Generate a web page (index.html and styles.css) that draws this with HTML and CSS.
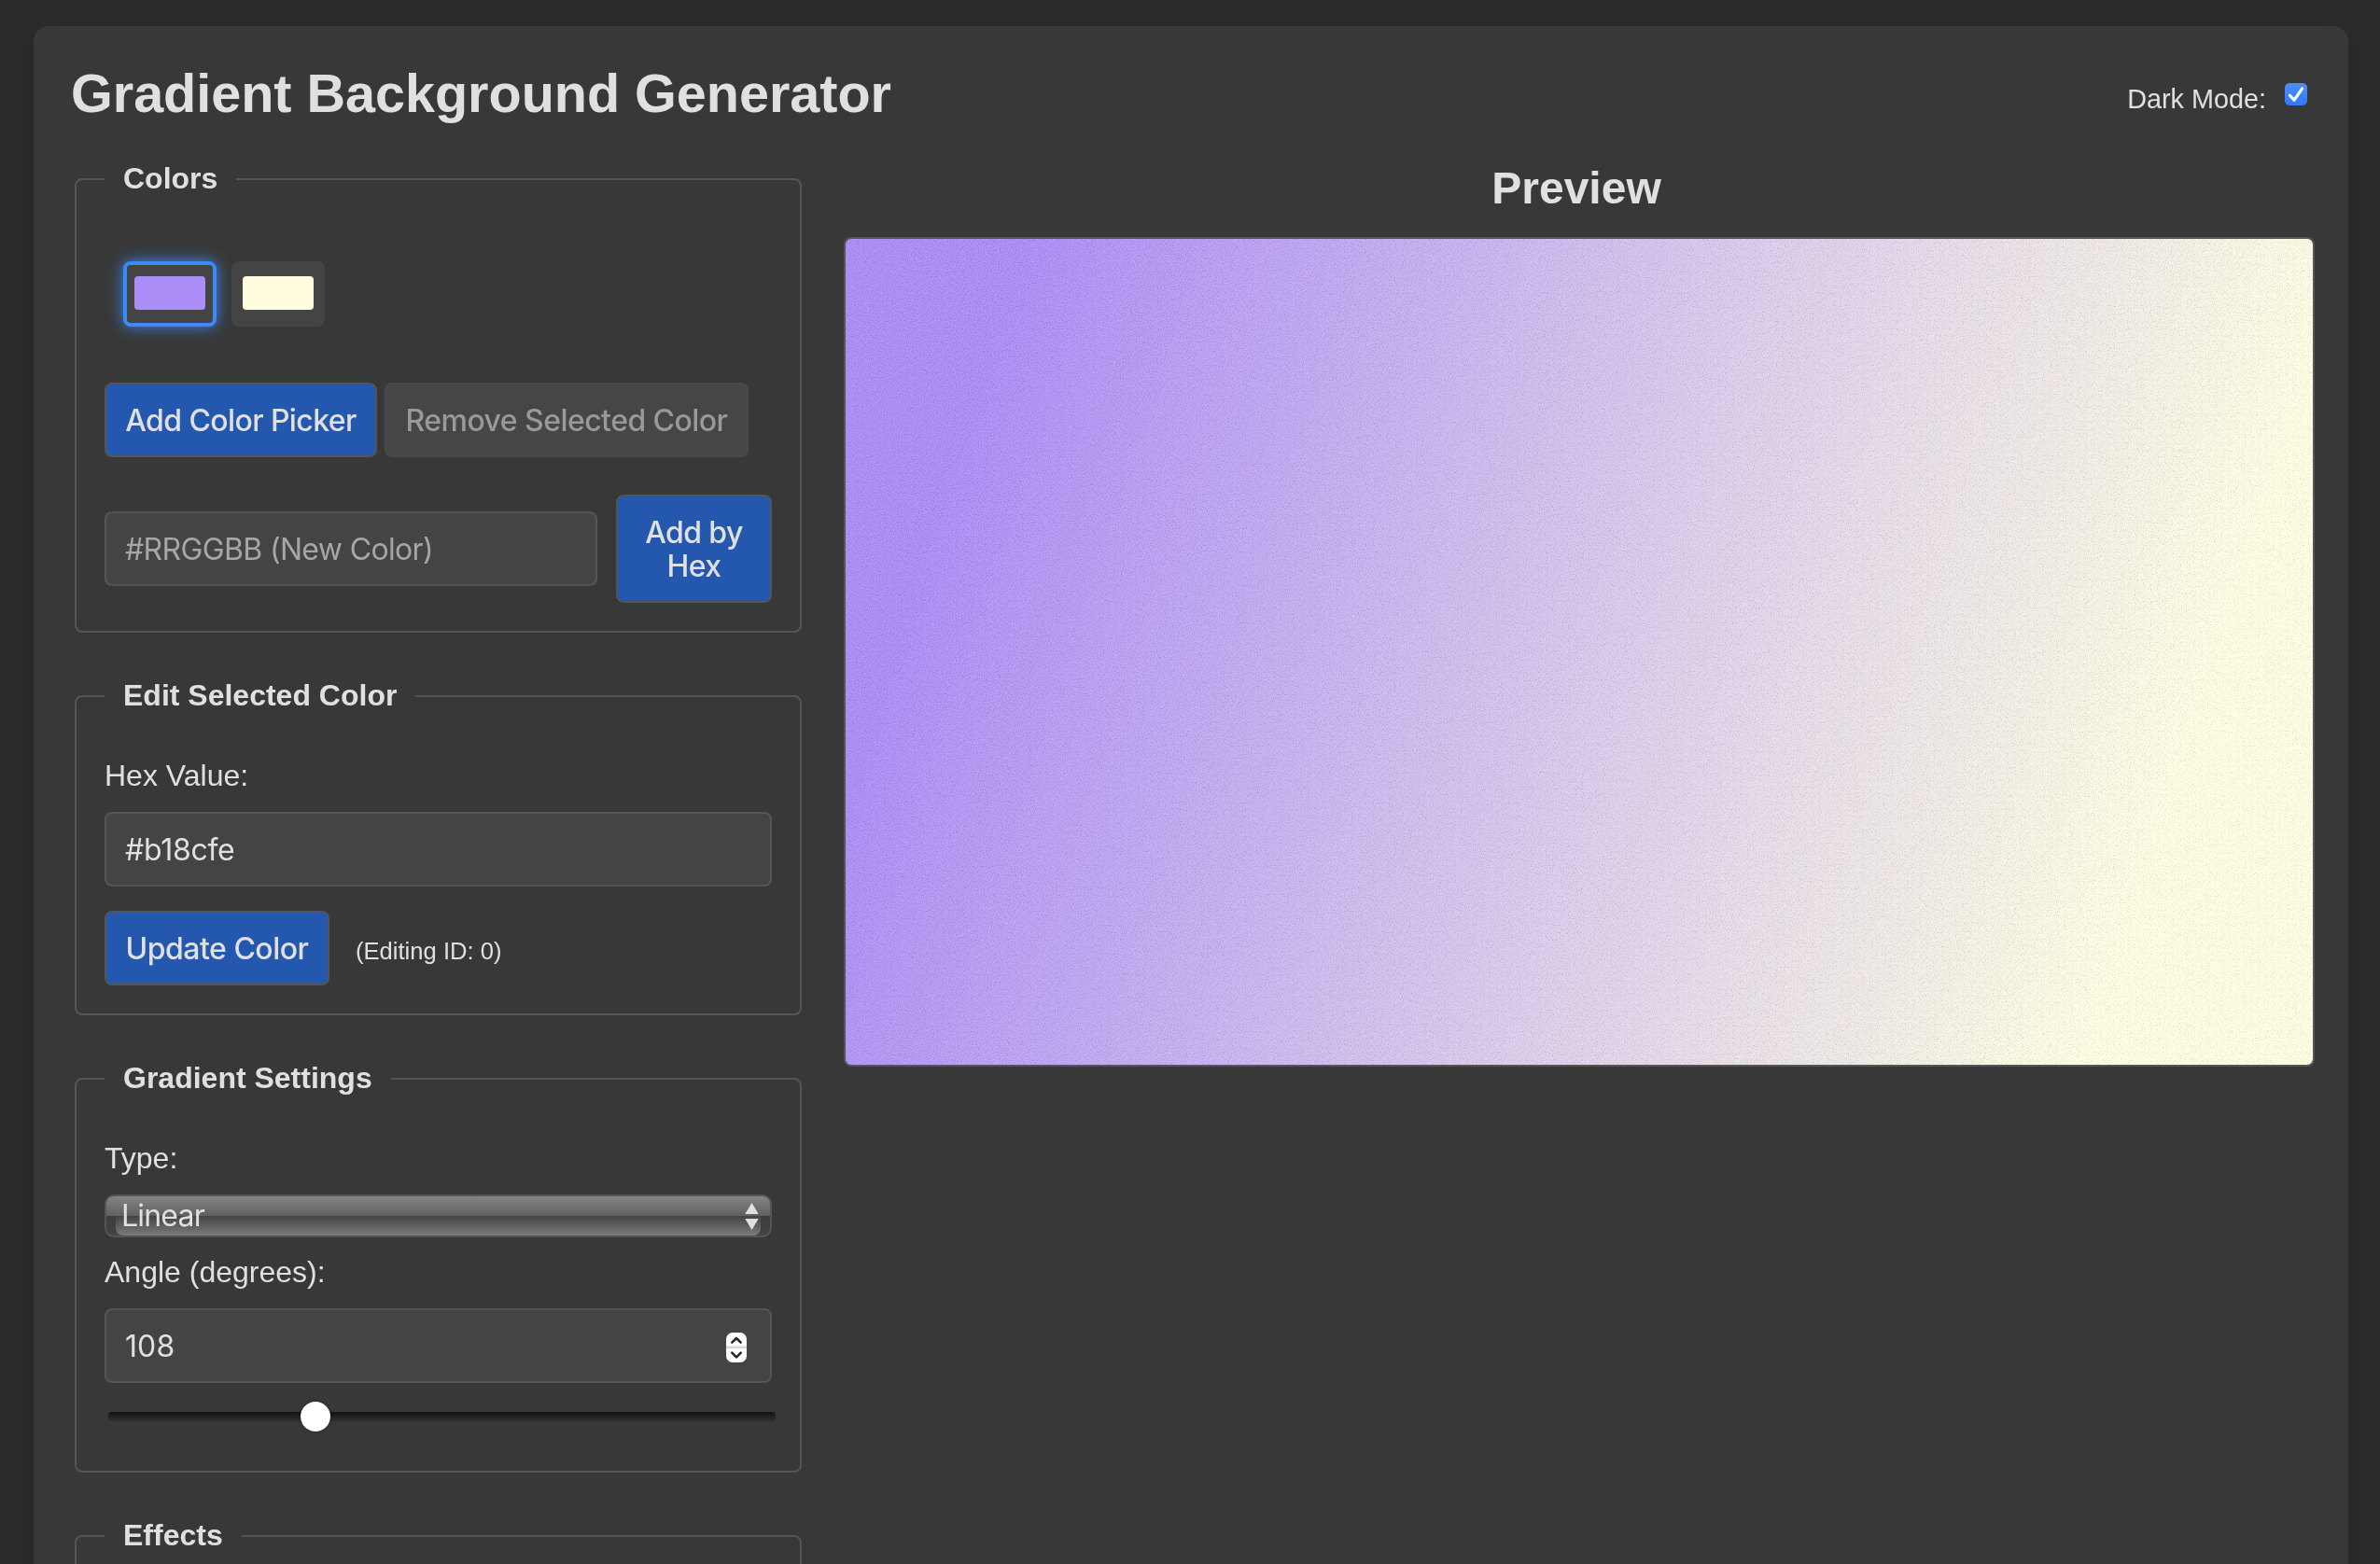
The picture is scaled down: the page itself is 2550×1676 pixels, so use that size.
FILE: index.html
```html
<!DOCTYPE html>
<html lang="en">
<head>
<meta charset="utf-8">
<title>Gradient Background Generator</title>
<link rel="stylesheet" href="styles.css">
</head>
<body>
<main class="container">
  <header class="header">
    <h1>Gradient Background Generator</h1>
    <div class="theme-toggle">
      <span>Dark Mode:</span>
      <svg class="checkbox" viewBox="0 0 24 24"><defs><linearGradient id="cb" x1="0" y1="0" x2="0" y2="1"><stop offset="0" stop-color="#4a90f8"/><stop offset="1" stop-color="#3478f6"/></linearGradient></defs><rect width="24" height="24" rx="5" fill="url(#cb)"/><path d="M5.4 13.2 L10 18.3 L18.6 5.9" fill="none" stroke="#fff" stroke-width="3.1" stroke-linecap="round" stroke-linejoin="round"/></svg>
    </div>
  </header>
  <div class="columns">
    <div class="controls">
      <fieldset class="group group-colors">
        <legend>Colors</legend>
        <div class="swatches">
          <div class="swatch selected"><span class="chip chip-violet"></span></div>
          <div class="swatch"><span class="chip chip-cream"></span></div>
        </div>
        <div class="actions">
          <button class="btn btn-add">Add Color Picker</button>
          <button class="btn btn-remove">Remove Selected Color</button>
        </div>
        <div class="hex-row">
          <input class="field" type="text" placeholder="#RRGGBB (New Color)">
          <button class="btn btn-hex">Add by<br>Hex</button>
        </div>
      </fieldset>
      <fieldset class="group group-edit">
        <legend>Edit Selected Color</legend>
        <label>Hex Value:</label>
        <input class="field field-hex" type="text" value="#b18cfe">
        <div class="update-row">
          <button class="btn btn-update">Update Color</button>
          <span class="note">(Editing ID: 0)</span>
        </div>
      </fieldset>
      <fieldset class="group group-settings">
        <legend>Gradient Settings</legend>
        <label>Type:</label>
        <div class="select">
          <span>Linear</span>
          <svg class="arrows" viewBox="0 0 15 29"><path d="M7.5 0 L14.7 12 H.3Z M.3 17 H14.7 L7.5 29Z" fill="#e0e0e0"/></svg>
        </div>
        <label class="label-angle">Angle (degrees):</label>
        <div class="number">
          <input class="field field-angle" type="text" value="108">
          <svg class="spinner" viewBox="0 0 22 32"><rect width="22" height="32" rx="7" fill="#fff"/><rect y="13.5" width="22" height="4" fill="#eee"/><rect y="15.2" width="22" height="1.6" fill="#d0d0d0"/><path d="M6.3 10.7 L11 6 L15.7 10.7 M6.3 21.6 L11 26.3 L15.7 21.6" fill="none" stroke="#262626" stroke-width="2.5" stroke-linecap="round" stroke-linejoin="round"/></svg>
        </div>
        <div class="slider"><span class="thumb"></span></div>
      </fieldset>
      <fieldset class="group group-effects">
        <legend>Effects</legend>
      </fieldset>
    </div>
    <section class="preview">
      <h2>Preview</h2>
      <div class="canvas">
        <svg class="grain" width="100%" height="100%">
          <filter id="noise" x="0" y="0" width="100%" height="100%" color-interpolation-filters="sRGB">
            <feTurbulence type="fractalNoise" baseFrequency="0.87" numOctaves="3" stitchTiles="stitch"/>
            <feColorMatrix values="2 0 0 0 -0.46  2 0 0 0 -0.46  2 0 0 0 -0.46  0 0 0 0 1"/>
          </filter>
          <rect width="100%" height="100%" filter="url(#noise)"/>
        </svg>
      </div>
    </section>
  </div>
</main>
</body>
</html>
```
FILE: styles.css
```css
* { box-sizing: border-box; }

html, body { height: 100%; overflow: hidden; }

body {
  margin: 0;
  padding: 28px 34px 0 36px;
  background: #2c2c2c;
  color: #e0e0e0;
  font-family: "Liberation Sans", Arial, sans-serif;
  font-size: 32px;
}

.container {
  height: 1800px;
  padding: 40px 36px 0 40px;
  background: #383838;
  border-radius: 16px;
  box-shadow: 0 8px 32px rgba(0, 0, 0, 0.2);
}

.header {
  display: flex;
  justify-content: space-between;
  align-items: flex-start;
  height: 104px;
}

h1 { margin: 0; font-size: 57.6px; line-height: 64px; letter-spacing: -0.04px; }

.theme-toggle {
  display: flex;
  align-items: flex-start;
  gap: 20px;
  padding: 21px 8px 0 0;
  font-size: 28.8px;
  line-height: 32px;
}
.theme-toggle span { padding-top: 1px; }

.checkbox { width: 24px; height: 24px; }

.columns {
  display: grid;
  grid-template-columns: 779px 1576px;
  column-gap: 45px;
  padding-left: 4px;
}

.controls { display: flex; flex-direction: column; gap: 48px; }

.group {
  min-width: 0;
  margin: 0;
  padding: 0 30px;
  border: 2px solid #555;
  border-radius: 8px;
}

legend { height: 40px; padding: 0 20px; font-weight: 700; line-height: 38px; }

.group-colors { height: 506px; padding-top: 68px; }
.group-edit { height: 362px; padding-top: 47px; }
.group-settings { height: 442px; padding-top: 47px; }
.group-effects { height: 300px; }

.swatches { display: flex; gap: 16px; padding-left: 20px; }

.swatch {
  display: flex;
  align-items: center;
  justify-content: center;
  width: 100px;
  height: 70px;
  padding-bottom: 2px;
  background: #444;
  border-radius: 8px;
}
.swatch.selected {
  border: 4px solid #3b8af8;
  box-shadow: 0 0 16px rgba(59, 138, 248, 0.95);
}

.chip { width: 76px; height: 36px; border-radius: 4px; }
.chip-violet { background: #ab8ef7; }
.chip-cream { background: #fffce0; }

.actions { display: flex; gap: 8px; margin-top: 60px; }

.btn {
  height: 80px;
  padding: 2px 0 0;
  border: 2px solid #555;
  border-radius: 8px;
  background: #2458ae;
  color: #e0e0e0;
  font: 500 32px/36px Inter, sans-serif;
  letter-spacing: -0.6px;
  white-space: nowrap;
}
.btn-add { width: 292px; }
.btn-remove { width: 390px; background: #464646; border-color: #494949; color: #999; letter-spacing: -0.55px; }
.btn-update { width: 241px; letter-spacing: -0.5px; }
.btn-hex { width: 167px; height: 116px; }

.hex-row { display: flex; align-items: center; gap: 20px; margin-top: 40px; }
.hex-row .field { width: 528px; }

.field {
  display: block;
  width: 100%;
  height: 80px;
  padding: 0 20px;
  border: 2px solid #555;
  border-radius: 8px;
  background: #444;
  color: #e0e0e0;
  font: 400 32px Inter, sans-serif;
  letter-spacing: -0.65px;
}
.field::placeholder { color: #a6a6a6; opacity: 1; }
.field-hex { letter-spacing: -0.3px; }
.field-angle { letter-spacing: 0.1px; }

label { display: block; margin-bottom: 21px; line-height: 36px; }
.label-angle { margin-top: 19px; }

.update-row { display: flex; align-items: center; gap: 28px; margin-top: 26px; }
.note { padding-top: 6px; font-size: 25.6px; }

.select {
  position: relative;
  display: flex;
  align-items: center;
  justify-content: space-between;
  height: 46px;
  padding: 0 12px 0 16px;
  border: 2px solid #555;
  border-radius: 10px;
  background: linear-gradient(#848484, #606060 50%, #3c3c3c 50%, #444);
  font: 400 32px Inter, sans-serif;
  letter-spacing: -0.8px;
}
.select::before {
  content: "";
  position: absolute;
  inset: 50% 10px 0;
  border-radius: 0 0 8px 8px;
  background: linear-gradient(#444, #7a7a7a);
}
.select > * { position: relative; }
.select span { padding-bottom: 2px; }

.arrows { width: 15px; height: 29px; }

.number { position: relative; }
.spinner {
  position: absolute;
  top: 26px;
  right: 27px;
  width: 22px;
  height: 32px;
}

.slider {
  width: 715px;
  height: 10px;
  margin: 31px 0 0 4px;
  border-radius: 4px;
  background: linear-gradient(#121212, #303030);
}
.thumb {
  display: block;
  width: 32px;
  height: 32px;
  margin-left: 206px;
  border-radius: 50%;
  background: #fff;
  box-shadow: 0 0 3px rgba(0, 0, 0, 0.5);
  transform: translateY(-11px);
}

h2 {
  margin: 0 0 25px;
  padding: 3px 6px 0 0;
  font-size: 48px;
  line-height: 54px;
  text-align: center;
}

.canvas {
  height: 889px;
  overflow: hidden;
  border: 2px solid #555;
  border-radius: 8px;
  background: linear-gradient(108deg, #ab8df6 10%, #fffee3 87%);
}
.grain { display: block; mix-blend-mode: hard-light; opacity: 0.11; }
```
